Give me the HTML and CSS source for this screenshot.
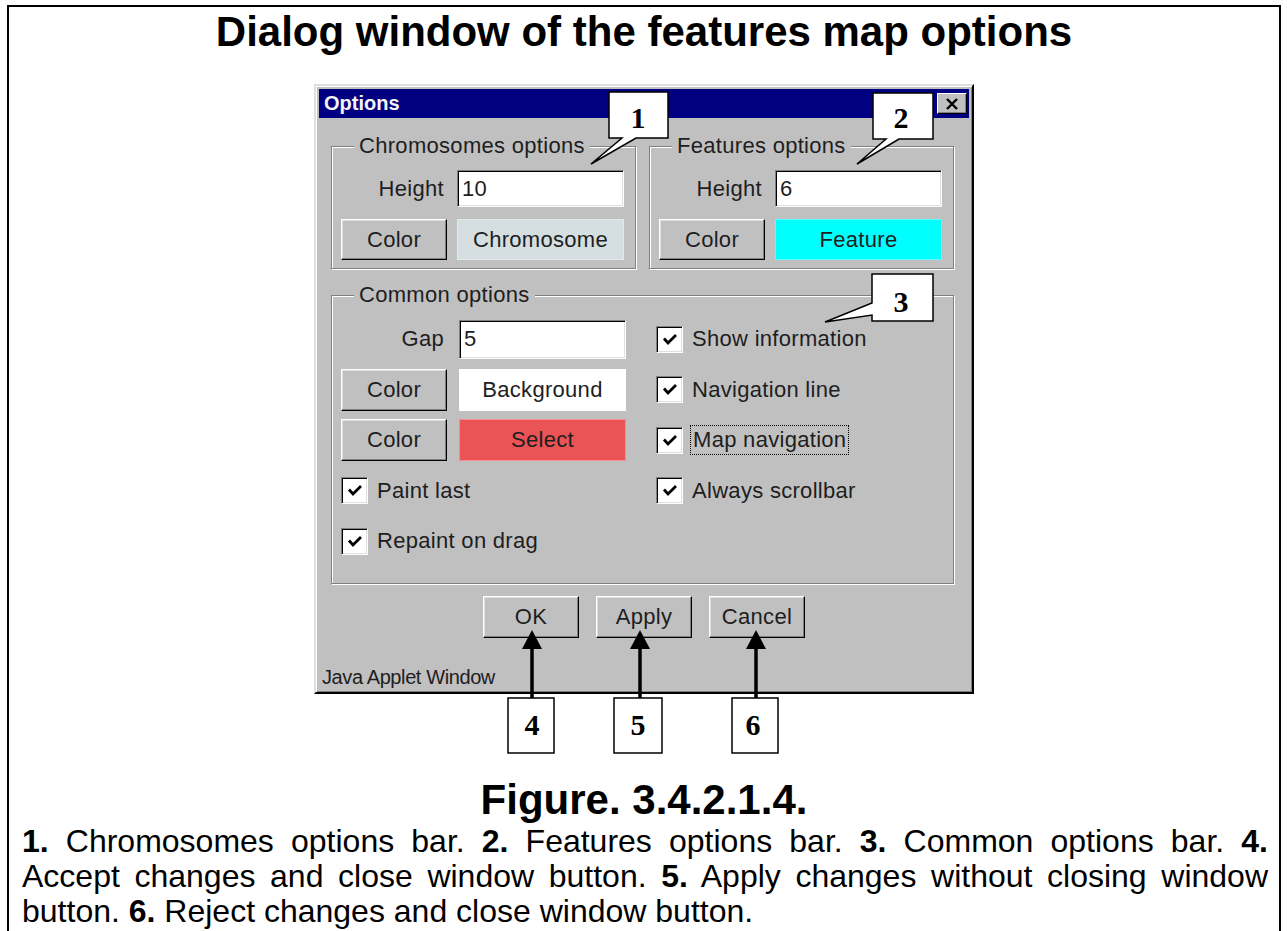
FILE: index.html
```html
<!DOCTYPE html>
<html>
<head>
	<title>Dialog window of the features map options</title>
	<link rel="stylesheet" href="styles.css">
</head>
<body>
	<div class="frame">
		<h1>Dialog window of the features map options</h1>

		<div class="dialog">
			<div class="titlebar">
				<span class="title-text">Options</span>
				<span class="close">
					<svg width="14" height="12" viewBox="0 0 14 12"><path d="M2 1 L12 11 M12 1 L2 11" stroke="#000" stroke-width="2.4"/></svg>
				</span>
			</div>
			<div class="dialog-body">
				<div class="top-groups">
					<fieldset class="group">
						<legend>Chromosomes options</legend>
						<div class="grid-two">
							<span class="field-label">Height</span>
							<div class="textbox">10</div>
							<div class="btn">Color</div>
							<div class="swatch swatch-chrom">Chromosome</div>
						</div>
					</fieldset>
					<fieldset class="group">
						<legend>Features options</legend>
						<div class="grid-two">
							<span class="field-label">Height</span>
							<div class="textbox">6</div>
							<div class="btn">Color</div>
							<div class="swatch swatch-feature">Feature</div>
						</div>
					</fieldset>
				</div>

				<fieldset class="group common">
					<legend>Common options</legend>
					<div class="grid-common">
						<span class="field-label">Gap</span>
						<div class="textbox">5</div>
						<div class="check col-right"><span class="box"><svg width="16" height="13" viewBox="0 0 16 13"><path d="M2 5.5 L6 10 L14 2" fill="none" stroke="#000" stroke-width="2.8"/></svg></span>Show information</div>

						<div class="btn">Color</div>
						<div class="swatch swatch-bg">Background</div>
						<div class="check col-right"><span class="box"><svg width="16" height="13" viewBox="0 0 16 13"><path d="M2 5.5 L6 10 L14 2" fill="none" stroke="#000" stroke-width="2.8"/></svg></span>Navigation line</div>

						<div class="btn">Color</div>
						<div class="swatch swatch-select">Select</div>
						<div class="check col-right"><span class="box"><svg width="16" height="13" viewBox="0 0 16 13"><path d="M2 5.5 L6 10 L14 2" fill="none" stroke="#000" stroke-width="2.8"/></svg></span><span class="focus">Map navigation</span></div>

						<div class="check col-left"><span class="box"><svg width="16" height="13" viewBox="0 0 16 13"><path d="M2 5.5 L6 10 L14 2" fill="none" stroke="#000" stroke-width="2.8"/></svg></span>Paint last</div>
						<div class="check col-right"><span class="box"><svg width="16" height="13" viewBox="0 0 16 13"><path d="M2 5.5 L6 10 L14 2" fill="none" stroke="#000" stroke-width="2.8"/></svg></span>Always scrollbar</div>

						<div class="check col-left"><span class="box"><svg width="16" height="13" viewBox="0 0 16 13"><path d="M2 5.5 L6 10 L14 2" fill="none" stroke="#000" stroke-width="2.8"/></svg></span>Repaint on drag</div>
					</div>
				</fieldset>

				<div class="buttons">
					<div class="btn">OK</div>
					<div class="btn">Apply</div>
					<div class="btn">Cancel</div>
				</div>
			</div>
			<div class="status">Java Applet Window</div>
		</div>

		<h2 class="figure-caption">Figure. 3.4.2.1.4.</h2>
		<p class="description"><b>1.</b> Chromosomes options bar. <b>2.</b> Features options bar. <b>3.</b> Common options bar. <b>4.</b> Accept changes and close window button. <b>5.</b> Apply changes without closing window button. <b>6.</b> Reject changes and close window button.</p>
	</div>

	<!-- numbered callouts drawn over the screenshot -->
	<svg class="callouts" width="1287" height="931" viewBox="0 0 1287 931">
		<g fill="#fff" stroke="#000" stroke-width="1.5">
			<path d="M609 92 H668 V138 H636 L591 164 L622 138 H609 Z"/>
			<path d="M873 93 H933 V139 H899 L857 164 L886 139 H873 Z"/>
			<path d="M872 274 H933 V321 H872 V315 L825 322 L872 303 Z"/>
			<rect x="508" y="698" width="46" height="55"/>
			<rect x="614" y="698" width="48" height="55"/>
			<rect x="732" y="698" width="46" height="55"/>
		</g>
		<g stroke="#000" stroke-width="3.5">
			<line x1="532" y1="698" x2="532" y2="646"/>
			<line x1="640" y1="698" x2="640" y2="646"/>
			<line x1="756" y1="698" x2="756" y2="646"/>
		</g>
		<g fill="#000">
			<polygon points="532,630 522,649 542,649"/>
			<polygon points="640,630 630,649 650,649"/>
			<polygon points="756,630 746,649 766,649"/>
		</g>
		<g class="callout-num" text-anchor="middle">
			<text x="638" y="128">1</text>
			<text x="901" y="128">2</text>
			<text x="901" y="312">3</text>
			<text x="532" y="735">4</text>
			<text x="638" y="735">5</text>
			<text x="753" y="735">6</text>
		</g>
	</svg>
</body>
</html>
```

FILE: styles.css
```css
html, body {
	margin: 0;
	padding: 0;
	overflow: hidden;
}
body {
	background-color: #FFF;
	color: #000;
	font-family: "Liberation Sans", Arial, sans-serif;
	height: 931px;
	position: relative;
	width: 1287px;
}
.frame {
	border: 2px solid #000;
	border-bottom: none;
	margin: 5px 0 0 7px;
	min-height: 960px;
	width: 1270px;
}
h1 {
	font-size: 42px;
	line-height: 48px;
	margin: 0;
	padding-top: 1px;
	text-align: center;
}

/* dialog */
.dialog {
	background-color: #C0C0C0;
	border: 2px solid;
	border-color: #DFDFDF #000 #000 #DFDFDF;
	box-shadow: inset 1px 1px 0 #FFF, inset -1px -1px 0 #808080;
	box-sizing: border-box;
	margin: 28px auto 0;
	padding: 3px;
	width: 660px;
}
.titlebar {
	align-items: center;
	background-color: #000080;
	display: flex;
	height: 29px;
	justify-content: space-between;
	padding: 0 2px 0 5px;
}
.title-text {
	color: #F4F4F4;
	font-size: 20px;
	font-weight: bold;
}
.close {
	align-items: center;
	background-color: #C0C0C0;
	border: 1px solid;
	border-color: #FFF #000 #000 #FFF;
	box-shadow: inset -1px -1px 0 #808080;
	box-sizing: border-box;
	display: flex;
	height: 21px;
	justify-content: center;
	width: 30px;
}
.dialog-body {
	color: #1E1E1E;
	font-size: 22px;
	letter-spacing: 0.3px;
	padding: 16px 12px 0 12px;
}
.top-groups {
	display: flex;
	gap: 13px;
}
.group {
	border: 1px solid #808080;
	box-shadow: inset 1px 1px 0 #FFF, 1px 1px 0 #FFF;
	box-sizing: border-box;
	margin: 0;
	min-width: 0;
	padding: 12px 11px 8px 9px;
	width: 305px;
}
.group legend {
	background-color: #C0C0C0;
	line-height: 24px;
	margin-left: 13px;
	padding: 0 5px;
}
.group.common {
	margin-top: 14px;
	padding: 11px 11px 21px 9px;
	width: 623px;
}
.grid-two {
	column-gap: 10px;
	display: grid;
	grid-template-columns: 106px 167px;
	grid-template-rows: 37px 41px;
	row-gap: 12px;
}
.grid-common {
	column-gap: 12px;
	display: grid;
	grid-auto-rows: 42px;
	grid-template-columns: 106px 167px 1fr;
	row-gap: 8.5px;
}
.field-label {
	align-self: center;
	padding-right: 3px;
	text-align: right;
}
.textbox {
	align-items: center;
	background-color: #FFF;
	border: 1px solid;
	border-color: #808080 #FFF #FFF #808080;
	box-shadow: inset 1px 1px 0 #000, inset -1px -1px 0 #DFDFDF;
	display: flex;
	padding-left: 4px;
}
.grid-common .textbox {
	align-self: center;
	height: 37px;
}
.btn {
	align-items: center;
	background-color: #C0C0C0;
	border: 1px solid;
	border-color: #FFF #000 #000 #FFF;
	box-shadow: inset -1px -1px 0 #808080, inset 1px 1px 0 #DFDFDF;
	display: flex;
	justify-content: center;
}
.swatch {
	align-items: center;
	box-shadow: inset 0 0 0 1px rgba(255, 255, 255, 0.35);
	display: flex;
	justify-content: center;
}
.swatch-chrom {
	background-color: #D5DEE1;
}
.swatch-feature {
	background-color: #00FFFF;
}
.swatch-bg {
	background-color: #FFF;
}
.swatch-select {
	background-color: #EA5457;
}
.check {
	align-items: center;
	display: flex;
	gap: 9px;
}
.check .box {
	align-items: center;
	background-color: #FFF;
	border: 1px solid;
	border-color: #808080 #FFF #FFF #808080;
	box-shadow: inset 1px 1px 0 #000, inset -1px -1px 0 #DFDFDF;
	box-sizing: border-box;
	display: flex;
	height: 27px;
	justify-content: center;
	width: 27px;
}
.col-left {
	grid-column: 1 / 3;
}
.col-right {
	grid-column: 3;
	padding-left: 18px;
}
.focus {
	outline: 1px dotted #000;
	outline-offset: 1px;
	padding: 0 1px;
}
.buttons {
	display: flex;
	gap: 17px;
	justify-content: center;
	margin-top: 12px;
}
.buttons .btn {
	box-sizing: border-box;
	height: 42px;
	width: 96px;
}
.status {
	color: #1E1E1E;
	font-size: 20px;
	letter-spacing: -0.4px;
	line-height: 24px;
	margin-top: 27px;
	padding-left: 3px;
}

/* caption */
.figure-caption {
	font-size: 42px;
	line-height: 48px;
	margin: 82px 0 0;
	text-align: center;
}
.description {
	font-size: 32px;
	line-height: 35px;
	margin: 0;
	padding: 0 11px 0 13px;
	text-align: justify;
}
.description b {
	display: inline-block;
	line-height: 35px;
}

.callouts {
	left: 0;
	pointer-events: none;
	position: absolute;
	top: 0;
}
.callout-num {
	font-family: "Liberation Serif", "Times New Roman", serif;
	font-size: 30px;
	font-weight: bold;
}
```
